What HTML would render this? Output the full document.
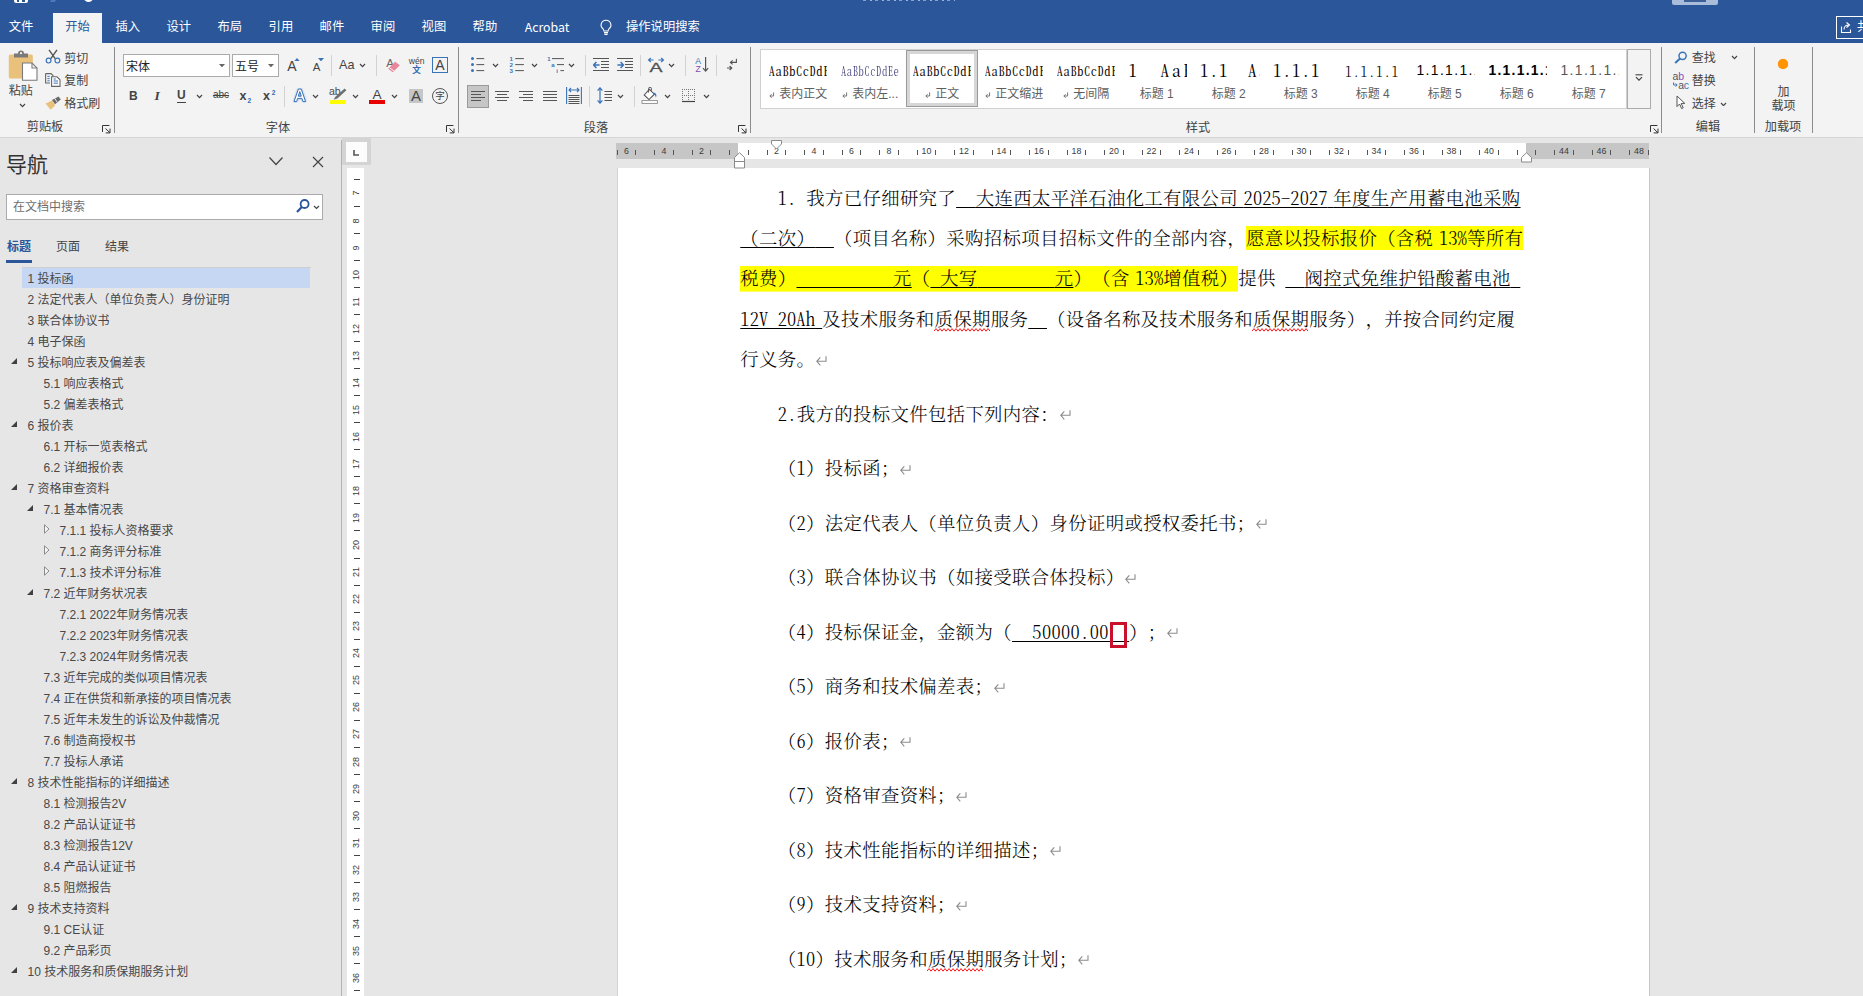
<!DOCTYPE html>
<html lang="zh-CN"><head><meta charset="utf-8"><title>Word</title>
<style>
html,body{margin:0;padding:0;}
body{width:1863px;height:996px;overflow:hidden;position:relative;background:#e6e6e6;font-family:'Liberation Sans','Noto Sans CJK SC',sans-serif;}
div,svg{box-sizing:content-box;}

.dl{position:absolute;height:28px;line-height:28px;font-family:'Noto Serif CJK SC','Liberation Serif',serif;font-size:18.4px;letter-spacing:0.34px;color:#000;font-weight:300;white-space:pre;text-spacing-trim:space-all;font-kerning:none;}
.dl .l{font-feature-settings:'hwid';letter-spacing:0.15px;}
.li .l{letter-spacing:0.36px;}
.dl .a{font-style:normal;font-feature-settings:'hwid';word-spacing:-4.0px;}
.dl u{text-decoration:underline;text-decoration-thickness:1.2px;text-underline-offset:1.7px;text-decoration-skip-ink:none;}
.dl .hl{background-image:linear-gradient(#ffff00,#ffff00);background-repeat:no-repeat;padding-bottom:1.5px;}
.dl .wv{position:relative;}
.dl .wz{position:absolute;left:-1px;top:23.2px;}
.dl .ret{display:inline-block;vertical-align:baseline;margin-left:0.5px;position:relative;top:-0.5px;}
.dl .rb{outline:3px solid #c8102e;outline-offset:-0.5px;}

</style></head><body>
<!-- document area -->
<div style="position:absolute;left:617px;top:168px;width:1032px;height:830px;background:#fff;border-left:1px solid #d4d4d4;box-sizing:border-box"></div>
<div style="position:absolute;left:1649px;top:168px;width:1px;height:830px;background:#c8c8c8"></div>
<div class="dl" style="left:777.7px;top:182.90px;word-spacing:0.5px;"><span class="l">1. </span>我方已仔细研究了<u><span class="l">  </span>大连西太平洋石油化工有限公司<i class="a"> </i><span class="l">2025-2027</span><i class="a"> </i>年度生产用蓄电池采购</u></div>
<div class="dl" style="left:740.3px;top:223.10px;"><u>（二次）<span class="l">  </span></u>（项目名称）采购招标项目招标文件的全部内容，<span class="hl" style="background-position:0 2.2px;background-size:100% 24px">愿意以投标报价（含税<i class="a"> </i><span class="l">13%</span>等所有</span></div>
<div class="dl" style="left:740.3px;top:263.40px;word-spacing:0.3px;"><span class="hl" style="background-position:0 1.5px;background-size:100% 25.6px">税费）<u><span class="l">          </span>元</u>（<u><span class="l"> </span>大写<span class="l">        </span>元</u>）（含<i class="a"> </i><span class="l">13%</span>增值税）</span>提供<span class="l"> </span><u><span class="l">  </span>阀控式免维护铅酸蓄电池<span class="l"> </span></u></div>
<div class="dl" style="left:740.3px;top:303.80px;"><u><span class="l">12V 20Ah</span><i class="a" style="word-spacing:-2.4px"> </i></u>及技术服务和<span class="wv">质保期<svg class="wz" width="56" height="4" viewBox="0 0 56 4"><path d="M0,3.2 L2,0.6 L4,3.2 L6,0.6 L8,3.2 L10,0.6 L12,3.2 L14,0.6 L16,3.2 L18,0.6 L20,3.2 L22,0.6 L24,3.2 L26,0.6 L28,3.2 L30,0.6 L32,3.2 L34,0.6 L36,3.2 L38,0.6 L40,3.2 L42,0.6 L44,3.2 L46,0.6 L48,3.2 L50,0.6 L52,3.2 L54,0.6 L56,3.2" fill="none" stroke="#ff1a1a" stroke-width="1"/></svg></span>服务<u><span class="l">  </span></u>（设备名称及技术服务和<span class="wv">质保期<svg class="wz" width="56" height="4" viewBox="0 0 56 4"><path d="M0,3.2 L2,0.6 L4,3.2 L6,0.6 L8,3.2 L10,0.6 L12,3.2 L14,0.6 L16,3.2 L18,0.6 L20,3.2 L22,0.6 L24,3.2 L26,0.6 L28,3.2 L30,0.6 L32,3.2 L34,0.6 L36,3.2 L38,0.6 L40,3.2 L42,0.6 L44,3.2 L46,0.6 L48,3.2 L50,0.6 L52,3.2 L54,0.6 L56,3.2" fill="none" stroke="#ff1a1a" stroke-width="1"/></svg></span>服务），并按合同约定履</div>
<div class="dl" style="left:740.3px;top:344.20px;">行义务。<svg class="ret" width="11" height="10" viewBox="0 0 11 10"><path d="M10,0.3 V5.3 H1 M4.3,1.3 L0.8,5.3 L4.3,9.3" fill="none" stroke="#8c8c8c" stroke-width="1.1"/></svg></div>
<div class="dl li" style="left:777.7px;top:398.90px;"><span class="l">2.</span>我方的投标文件包括下列内容：<svg class="ret" width="11" height="10" viewBox="0 0 11 10"><path d="M10,0.3 V5.3 H1 M4.3,1.3 L0.8,5.3 L4.3,9.3" fill="none" stroke="#8c8c8c" stroke-width="1.1"/></svg></div>
<div class="dl li" style="left:777.7px;top:453.40px;">（<span class="l">1</span>）投标函；<svg class="ret" width="11" height="10" viewBox="0 0 11 10"><path d="M10,0.3 V5.3 H1 M4.3,1.3 L0.8,5.3 L4.3,9.3" fill="none" stroke="#8c8c8c" stroke-width="1.1"/></svg></div>
<div class="dl li" style="left:777.7px;top:507.90px;">（<span class="l">2</span>）法定代表人（单位负责人）身份证明或授权委托书；<svg class="ret" width="11" height="10" viewBox="0 0 11 10"><path d="M10,0.3 V5.3 H1 M4.3,1.3 L0.8,5.3 L4.3,9.3" fill="none" stroke="#8c8c8c" stroke-width="1.1"/></svg></div>
<div class="dl li" style="left:777.7px;top:562.40px;">（<span class="l">3</span>）联合体协议书（如接受联合体投标）<svg class="ret" width="11" height="10" viewBox="0 0 11 10"><path d="M10,0.3 V5.3 H1 M4.3,1.3 L0.8,5.3 L4.3,9.3" fill="none" stroke="#8c8c8c" stroke-width="1.1"/></svg></div>
<div class="dl li" style="left:777.7px;top:616.90px;">（<span class="l">4</span>）投标保证金，金额为（<u><span class="l"><span style="word-spacing:0.6px">  50000.00  </span></span></u>）；<svg class="ret" width="11" height="10" viewBox="0 0 11 10"><path d="M10,0.3 V5.3 H1 M4.3,1.3 L0.8,5.3 L4.3,9.3" fill="none" stroke="#8c8c8c" stroke-width="1.1"/></svg></div>
<div class="dl li" style="left:777.7px;top:671.40px;">（<span class="l">5</span>）商务和技术偏差表；<svg class="ret" width="11" height="10" viewBox="0 0 11 10"><path d="M10,0.3 V5.3 H1 M4.3,1.3 L0.8,5.3 L4.3,9.3" fill="none" stroke="#8c8c8c" stroke-width="1.1"/></svg></div>
<div class="dl li" style="left:777.7px;top:725.90px;">（<span class="l">6</span>）报价表；<svg class="ret" width="11" height="10" viewBox="0 0 11 10"><path d="M10,0.3 V5.3 H1 M4.3,1.3 L0.8,5.3 L4.3,9.3" fill="none" stroke="#8c8c8c" stroke-width="1.1"/></svg></div>
<div class="dl li" style="left:777.7px;top:780.40px;">（<span class="l">7</span>）资格审查资料；<svg class="ret" width="11" height="10" viewBox="0 0 11 10"><path d="M10,0.3 V5.3 H1 M4.3,1.3 L0.8,5.3 L4.3,9.3" fill="none" stroke="#8c8c8c" stroke-width="1.1"/></svg></div>
<div class="dl li" style="left:777.7px;top:834.90px;">（<span class="l">8</span>）技术性能指标的详细描述；<svg class="ret" width="11" height="10" viewBox="0 0 11 10"><path d="M10,0.3 V5.3 H1 M4.3,1.3 L0.8,5.3 L4.3,9.3" fill="none" stroke="#8c8c8c" stroke-width="1.1"/></svg></div>
<div class="dl li" style="left:777.7px;top:889.40px;">（<span class="l">9</span>）技术支持资料；<svg class="ret" width="11" height="10" viewBox="0 0 11 10"><path d="M10,0.3 V5.3 H1 M4.3,1.3 L0.8,5.3 L4.3,9.3" fill="none" stroke="#8c8c8c" stroke-width="1.1"/></svg></div>
<div class="dl li" style="left:777.7px;top:943.90px;">（<span class="l">10</span>）技术服务和<span class="wv">质保期<svg class="wz" width="56" height="4" viewBox="0 0 56 4"><path d="M0,3.2 L2,0.6 L4,3.2 L6,0.6 L8,3.2 L10,0.6 L12,3.2 L14,0.6 L16,3.2 L18,0.6 L20,3.2 L22,0.6 L24,3.2 L26,0.6 L28,3.2 L30,0.6 L32,3.2 L34,0.6 L36,3.2 L38,0.6 L40,3.2 L42,0.6 L44,3.2 L46,0.6 L48,3.2 L50,0.6 L52,3.2 L54,0.6 L56,3.2" fill="none" stroke="#ff1a1a" stroke-width="1"/></svg></span>服务计划；<svg class="ret" width="11" height="10" viewBox="0 0 11 10"><path d="M10,0.3 V5.3 H1 M4.3,1.3 L0.8,5.3 L4.3,9.3" fill="none" stroke="#8c8c8c" stroke-width="1.1"/></svg></div>
<div style="position:absolute;left:1110.1px;top:622px;width:16.9px;height:25.8px;border:3px solid #c9112b;box-sizing:border-box"></div>
<!-- rulers -->
<div style="position:absolute;left:342px;top:138px;width:29px;height:27px;background:#d4d4d4"></div>
<div style="position:absolute;left:346px;top:142px;width:20.5px;height:19.5px;background:#fcfcfc"></div>
<svg style="position:absolute;left:352px;top:149px;" width="8" height="8" viewBox="0 0 8 8"><path d="M2,1 V6 H7" fill="none" stroke="#555" stroke-width="1.6"/></svg>
<div style="position:absolute;left:347px;top:168px;width:17px;height:828px;background:#fff"></div>
<div style="position:absolute;left:354px;top:179px;width:6px;height:1px;background:#444"></div>
<div style="position:absolute;left:354px;top:206px;width:6px;height:1px;background:#444"></div>
<div style="position:absolute;left:346.2px;top:187.4px;width:20px;height:12px;line-height:12px;text-align:center;font-size:9px;color:#3a3a3a;transform:rotate(-90deg);">7</div>
<div style="position:absolute;left:354px;top:233px;width:6px;height:1px;background:#444"></div>
<div style="position:absolute;left:346.2px;top:214.5px;width:20px;height:12px;line-height:12px;text-align:center;font-size:9px;color:#3a3a3a;transform:rotate(-90deg);">8</div>
<div style="position:absolute;left:354px;top:260px;width:6px;height:1px;background:#444"></div>
<div style="position:absolute;left:346.2px;top:241.5px;width:20px;height:12px;line-height:12px;text-align:center;font-size:9px;color:#3a3a3a;transform:rotate(-90deg);">9</div>
<div style="position:absolute;left:354px;top:287px;width:6px;height:1px;background:#444"></div>
<div style="position:absolute;left:346.2px;top:268.6px;width:20px;height:12px;line-height:12px;text-align:center;font-size:9px;color:#3a3a3a;transform:rotate(-90deg);">10</div>
<div style="position:absolute;left:354px;top:314px;width:6px;height:1px;background:#444"></div>
<div style="position:absolute;left:346.2px;top:295.6px;width:20px;height:12px;line-height:12px;text-align:center;font-size:9px;color:#3a3a3a;transform:rotate(-90deg);">11</div>
<div style="position:absolute;left:354px;top:341px;width:6px;height:1px;background:#444"></div>
<div style="position:absolute;left:346.2px;top:322.6px;width:20px;height:12px;line-height:12px;text-align:center;font-size:9px;color:#3a3a3a;transform:rotate(-90deg);">12</div>
<div style="position:absolute;left:354px;top:368px;width:6px;height:1px;background:#444"></div>
<div style="position:absolute;left:346.2px;top:349.7px;width:20px;height:12px;line-height:12px;text-align:center;font-size:9px;color:#3a3a3a;transform:rotate(-90deg);">13</div>
<div style="position:absolute;left:354px;top:395px;width:6px;height:1px;background:#444"></div>
<div style="position:absolute;left:346.2px;top:376.8px;width:20px;height:12px;line-height:12px;text-align:center;font-size:9px;color:#3a3a3a;transform:rotate(-90deg);">14</div>
<div style="position:absolute;left:354px;top:422px;width:6px;height:1px;background:#444"></div>
<div style="position:absolute;left:346.2px;top:403.8px;width:20px;height:12px;line-height:12px;text-align:center;font-size:9px;color:#3a3a3a;transform:rotate(-90deg);">15</div>
<div style="position:absolute;left:354px;top:449px;width:6px;height:1px;background:#444"></div>
<div style="position:absolute;left:346.2px;top:430.9px;width:20px;height:12px;line-height:12px;text-align:center;font-size:9px;color:#3a3a3a;transform:rotate(-90deg);">16</div>
<div style="position:absolute;left:354px;top:476px;width:6px;height:1px;background:#444"></div>
<div style="position:absolute;left:346.2px;top:457.9px;width:20px;height:12px;line-height:12px;text-align:center;font-size:9px;color:#3a3a3a;transform:rotate(-90deg);">17</div>
<div style="position:absolute;left:354px;top:503px;width:6px;height:1px;background:#444"></div>
<div style="position:absolute;left:346.2px;top:485.0px;width:20px;height:12px;line-height:12px;text-align:center;font-size:9px;color:#3a3a3a;transform:rotate(-90deg);">18</div>
<div style="position:absolute;left:354px;top:530px;width:6px;height:1px;background:#444"></div>
<div style="position:absolute;left:346.2px;top:512.0px;width:20px;height:12px;line-height:12px;text-align:center;font-size:9px;color:#3a3a3a;transform:rotate(-90deg);">19</div>
<div style="position:absolute;left:354px;top:558px;width:6px;height:1px;background:#444"></div>
<div style="position:absolute;left:346.2px;top:539.1px;width:20px;height:12px;line-height:12px;text-align:center;font-size:9px;color:#3a3a3a;transform:rotate(-90deg);">20</div>
<div style="position:absolute;left:354px;top:585px;width:6px;height:1px;background:#444"></div>
<div style="position:absolute;left:346.2px;top:566.1px;width:20px;height:12px;line-height:12px;text-align:center;font-size:9px;color:#3a3a3a;transform:rotate(-90deg);">21</div>
<div style="position:absolute;left:354px;top:612px;width:6px;height:1px;background:#444"></div>
<div style="position:absolute;left:346.2px;top:593.1px;width:20px;height:12px;line-height:12px;text-align:center;font-size:9px;color:#3a3a3a;transform:rotate(-90deg);">22</div>
<div style="position:absolute;left:354px;top:639px;width:6px;height:1px;background:#444"></div>
<div style="position:absolute;left:346.2px;top:620.2px;width:20px;height:12px;line-height:12px;text-align:center;font-size:9px;color:#3a3a3a;transform:rotate(-90deg);">23</div>
<div style="position:absolute;left:354px;top:666px;width:6px;height:1px;background:#444"></div>
<div style="position:absolute;left:346.2px;top:647.2px;width:20px;height:12px;line-height:12px;text-align:center;font-size:9px;color:#3a3a3a;transform:rotate(-90deg);">24</div>
<div style="position:absolute;left:354px;top:693px;width:6px;height:1px;background:#444"></div>
<div style="position:absolute;left:346.2px;top:674.3px;width:20px;height:12px;line-height:12px;text-align:center;font-size:9px;color:#3a3a3a;transform:rotate(-90deg);">25</div>
<div style="position:absolute;left:354px;top:720px;width:6px;height:1px;background:#444"></div>
<div style="position:absolute;left:346.2px;top:701.4px;width:20px;height:12px;line-height:12px;text-align:center;font-size:9px;color:#3a3a3a;transform:rotate(-90deg);">26</div>
<div style="position:absolute;left:354px;top:747px;width:6px;height:1px;background:#444"></div>
<div style="position:absolute;left:346.2px;top:728.4px;width:20px;height:12px;line-height:12px;text-align:center;font-size:9px;color:#3a3a3a;transform:rotate(-90deg);">27</div>
<div style="position:absolute;left:354px;top:774px;width:6px;height:1px;background:#444"></div>
<div style="position:absolute;left:346.2px;top:755.5px;width:20px;height:12px;line-height:12px;text-align:center;font-size:9px;color:#3a3a3a;transform:rotate(-90deg);">28</div>
<div style="position:absolute;left:354px;top:801px;width:6px;height:1px;background:#444"></div>
<div style="position:absolute;left:346.2px;top:782.5px;width:20px;height:12px;line-height:12px;text-align:center;font-size:9px;color:#3a3a3a;transform:rotate(-90deg);">29</div>
<div style="position:absolute;left:354px;top:828px;width:6px;height:1px;background:#444"></div>
<div style="position:absolute;left:346.2px;top:809.5px;width:20px;height:12px;line-height:12px;text-align:center;font-size:9px;color:#3a3a3a;transform:rotate(-90deg);">30</div>
<div style="position:absolute;left:354px;top:855px;width:6px;height:1px;background:#444"></div>
<div style="position:absolute;left:346.2px;top:836.6px;width:20px;height:12px;line-height:12px;text-align:center;font-size:9px;color:#3a3a3a;transform:rotate(-90deg);">31</div>
<div style="position:absolute;left:354px;top:882px;width:6px;height:1px;background:#444"></div>
<div style="position:absolute;left:346.2px;top:863.6px;width:20px;height:12px;line-height:12px;text-align:center;font-size:9px;color:#3a3a3a;transform:rotate(-90deg);">32</div>
<div style="position:absolute;left:354px;top:909px;width:6px;height:1px;background:#444"></div>
<div style="position:absolute;left:346.2px;top:890.7px;width:20px;height:12px;line-height:12px;text-align:center;font-size:9px;color:#3a3a3a;transform:rotate(-90deg);">33</div>
<div style="position:absolute;left:354px;top:936px;width:6px;height:1px;background:#444"></div>
<div style="position:absolute;left:346.2px;top:917.8px;width:20px;height:12px;line-height:12px;text-align:center;font-size:9px;color:#3a3a3a;transform:rotate(-90deg);">34</div>
<div style="position:absolute;left:354px;top:963px;width:6px;height:1px;background:#444"></div>
<div style="position:absolute;left:346.2px;top:944.8px;width:20px;height:12px;line-height:12px;text-align:center;font-size:9px;color:#3a3a3a;transform:rotate(-90deg);">35</div>
<div style="position:absolute;left:354px;top:990px;width:6px;height:1px;background:#444"></div>
<div style="position:absolute;left:346.2px;top:971.9px;width:20px;height:12px;line-height:12px;text-align:center;font-size:9px;color:#3a3a3a;transform:rotate(-90deg);">36</div>
<div style="position:absolute;left:616px;top:143px;width:1033px;height:16px;background:#fff"></div>
<div style="position:absolute;left:616px;top:143px;width:122px;height:16px;background:#c6c6c6"></div>
<div style="position:absolute;left:1526px;top:143px;width:123px;height:16px;background:#c6c6c6"></div>
<div style="position:absolute;left:617px;top:150px;width:1px;height:5px;background:#555"></div>
<div style="position:absolute;left:635px;top:150px;width:1px;height:5px;background:#555"></div>
<div style="position:absolute;left:654px;top:150px;width:1px;height:5px;background:#555"></div>
<div style="position:absolute;left:673px;top:150px;width:1px;height:5px;background:#555"></div>
<div style="position:absolute;left:692px;top:150px;width:1px;height:5px;background:#555"></div>
<div style="position:absolute;left:710px;top:150px;width:1px;height:5px;background:#555"></div>
<div style="position:absolute;left:729px;top:150px;width:1px;height:5px;background:#555"></div>
<div style="position:absolute;left:748px;top:150px;width:1px;height:5px;background:#555"></div>
<div style="position:absolute;left:767px;top:150px;width:1px;height:5px;background:#555"></div>
<div style="position:absolute;left:785px;top:150px;width:1px;height:5px;background:#555"></div>
<div style="position:absolute;left:804px;top:150px;width:1px;height:5px;background:#555"></div>
<div style="position:absolute;left:823px;top:150px;width:1px;height:5px;background:#555"></div>
<div style="position:absolute;left:842px;top:150px;width:1px;height:5px;background:#555"></div>
<div style="position:absolute;left:860px;top:150px;width:1px;height:5px;background:#555"></div>
<div style="position:absolute;left:879px;top:150px;width:1px;height:5px;background:#555"></div>
<div style="position:absolute;left:898px;top:150px;width:1px;height:5px;background:#555"></div>
<div style="position:absolute;left:917px;top:150px;width:1px;height:5px;background:#555"></div>
<div style="position:absolute;left:935px;top:150px;width:1px;height:5px;background:#555"></div>
<div style="position:absolute;left:954px;top:150px;width:1px;height:5px;background:#555"></div>
<div style="position:absolute;left:973px;top:150px;width:1px;height:5px;background:#555"></div>
<div style="position:absolute;left:992px;top:150px;width:1px;height:5px;background:#555"></div>
<div style="position:absolute;left:1010px;top:150px;width:1px;height:5px;background:#555"></div>
<div style="position:absolute;left:1029px;top:150px;width:1px;height:5px;background:#555"></div>
<div style="position:absolute;left:1048px;top:150px;width:1px;height:5px;background:#555"></div>
<div style="position:absolute;left:1067px;top:150px;width:1px;height:5px;background:#555"></div>
<div style="position:absolute;left:1085px;top:150px;width:1px;height:5px;background:#555"></div>
<div style="position:absolute;left:1104px;top:150px;width:1px;height:5px;background:#555"></div>
<div style="position:absolute;left:1123px;top:150px;width:1px;height:5px;background:#555"></div>
<div style="position:absolute;left:1142px;top:150px;width:1px;height:5px;background:#555"></div>
<div style="position:absolute;left:1160px;top:150px;width:1px;height:5px;background:#555"></div>
<div style="position:absolute;left:1179px;top:150px;width:1px;height:5px;background:#555"></div>
<div style="position:absolute;left:1198px;top:150px;width:1px;height:5px;background:#555"></div>
<div style="position:absolute;left:1217px;top:150px;width:1px;height:5px;background:#555"></div>
<div style="position:absolute;left:1235px;top:150px;width:1px;height:5px;background:#555"></div>
<div style="position:absolute;left:1254px;top:150px;width:1px;height:5px;background:#555"></div>
<div style="position:absolute;left:1273px;top:150px;width:1px;height:5px;background:#555"></div>
<div style="position:absolute;left:1292px;top:150px;width:1px;height:5px;background:#555"></div>
<div style="position:absolute;left:1310px;top:150px;width:1px;height:5px;background:#555"></div>
<div style="position:absolute;left:1329px;top:150px;width:1px;height:5px;background:#555"></div>
<div style="position:absolute;left:1348px;top:150px;width:1px;height:5px;background:#555"></div>
<div style="position:absolute;left:1367px;top:150px;width:1px;height:5px;background:#555"></div>
<div style="position:absolute;left:1385px;top:150px;width:1px;height:5px;background:#555"></div>
<div style="position:absolute;left:1404px;top:150px;width:1px;height:5px;background:#555"></div>
<div style="position:absolute;left:1423px;top:150px;width:1px;height:5px;background:#555"></div>
<div style="position:absolute;left:1442px;top:150px;width:1px;height:5px;background:#555"></div>
<div style="position:absolute;left:1460px;top:150px;width:1px;height:5px;background:#555"></div>
<div style="position:absolute;left:1479px;top:150px;width:1px;height:5px;background:#555"></div>
<div style="position:absolute;left:1498px;top:150px;width:1px;height:5px;background:#555"></div>
<div style="position:absolute;left:1517px;top:150px;width:1px;height:5px;background:#555"></div>
<div style="position:absolute;left:1535px;top:150px;width:1px;height:5px;background:#555"></div>
<div style="position:absolute;left:1554px;top:150px;width:1px;height:5px;background:#555"></div>
<div style="position:absolute;left:1573px;top:150px;width:1px;height:5px;background:#555"></div>
<div style="position:absolute;left:1592px;top:150px;width:1px;height:5px;background:#555"></div>
<div style="position:absolute;left:1610px;top:150px;width:1px;height:5px;background:#555"></div>
<div style="position:absolute;left:1629px;top:150px;width:1px;height:5px;background:#555"></div>
<div style="position:absolute;left:1648px;top:150px;width:1px;height:5px;background:#555"></div>
<div style="position:absolute;left:616.5px;top:146px;width:20px;height:11px;line-height:11px;text-align:center;font-size:8.8px;color:#3a3a3a;">6</div>
<div style="position:absolute;left:654.0px;top:146px;width:20px;height:11px;line-height:11px;text-align:center;font-size:8.8px;color:#3a3a3a;">4</div>
<div style="position:absolute;left:691.5px;top:146px;width:20px;height:11px;line-height:11px;text-align:center;font-size:8.8px;color:#3a3a3a;">2</div>
<div style="position:absolute;left:766.5px;top:146px;width:20px;height:11px;line-height:11px;text-align:center;font-size:8.8px;color:#3a3a3a;">2</div>
<div style="position:absolute;left:804.0px;top:146px;width:20px;height:11px;line-height:11px;text-align:center;font-size:8.8px;color:#3a3a3a;">4</div>
<div style="position:absolute;left:841.5px;top:146px;width:20px;height:11px;line-height:11px;text-align:center;font-size:8.8px;color:#3a3a3a;">6</div>
<div style="position:absolute;left:879.0px;top:146px;width:20px;height:11px;line-height:11px;text-align:center;font-size:8.8px;color:#3a3a3a;">8</div>
<div style="position:absolute;left:916.5px;top:146px;width:20px;height:11px;line-height:11px;text-align:center;font-size:8.8px;color:#3a3a3a;">10</div>
<div style="position:absolute;left:954.0px;top:146px;width:20px;height:11px;line-height:11px;text-align:center;font-size:8.8px;color:#3a3a3a;">12</div>
<div style="position:absolute;left:991.5px;top:146px;width:20px;height:11px;line-height:11px;text-align:center;font-size:8.8px;color:#3a3a3a;">14</div>
<div style="position:absolute;left:1029.0px;top:146px;width:20px;height:11px;line-height:11px;text-align:center;font-size:8.8px;color:#3a3a3a;">16</div>
<div style="position:absolute;left:1066.5px;top:146px;width:20px;height:11px;line-height:11px;text-align:center;font-size:8.8px;color:#3a3a3a;">18</div>
<div style="position:absolute;left:1104.0px;top:146px;width:20px;height:11px;line-height:11px;text-align:center;font-size:8.8px;color:#3a3a3a;">20</div>
<div style="position:absolute;left:1141.5px;top:146px;width:20px;height:11px;line-height:11px;text-align:center;font-size:8.8px;color:#3a3a3a;">22</div>
<div style="position:absolute;left:1179.0px;top:146px;width:20px;height:11px;line-height:11px;text-align:center;font-size:8.8px;color:#3a3a3a;">24</div>
<div style="position:absolute;left:1216.5px;top:146px;width:20px;height:11px;line-height:11px;text-align:center;font-size:8.8px;color:#3a3a3a;">26</div>
<div style="position:absolute;left:1254.0px;top:146px;width:20px;height:11px;line-height:11px;text-align:center;font-size:8.8px;color:#3a3a3a;">28</div>
<div style="position:absolute;left:1291.5px;top:146px;width:20px;height:11px;line-height:11px;text-align:center;font-size:8.8px;color:#3a3a3a;">30</div>
<div style="position:absolute;left:1329.0px;top:146px;width:20px;height:11px;line-height:11px;text-align:center;font-size:8.8px;color:#3a3a3a;">32</div>
<div style="position:absolute;left:1366.5px;top:146px;width:20px;height:11px;line-height:11px;text-align:center;font-size:8.8px;color:#3a3a3a;">34</div>
<div style="position:absolute;left:1404.0px;top:146px;width:20px;height:11px;line-height:11px;text-align:center;font-size:8.8px;color:#3a3a3a;">36</div>
<div style="position:absolute;left:1441.5px;top:146px;width:20px;height:11px;line-height:11px;text-align:center;font-size:8.8px;color:#3a3a3a;">38</div>
<div style="position:absolute;left:1479.0px;top:146px;width:20px;height:11px;line-height:11px;text-align:center;font-size:8.8px;color:#3a3a3a;">40</div>
<div style="position:absolute;left:1554.0px;top:146px;width:20px;height:11px;line-height:11px;text-align:center;font-size:8.8px;color:#3a3a3a;">44</div>
<div style="position:absolute;left:1591.5px;top:146px;width:20px;height:11px;line-height:11px;text-align:center;font-size:8.8px;color:#3a3a3a;">46</div>
<div style="position:absolute;left:1629.0px;top:146px;width:20px;height:11px;line-height:11px;text-align:center;font-size:8.8px;color:#3a3a3a;">48</div>
<svg style="position:absolute;left:771px;top:140.4px;" width="12" height="10" viewBox="0 0 12 10"><path d="M0.5,0.5 H10.5 V4 L5.5,9 L0.5,4 Z" fill="#fff" stroke="#8a8a8a" stroke-width="1"/></svg>
<svg style="position:absolute;left:734px;top:151.6px;" width="12" height="17" viewBox="0 0 12 17"><path d="M0.5,5.5 L5.5,0.7 L10.5,5.5 V16 H0.5 Z M0.5,9.5 H10.5" fill="#fff" stroke="#8a8a8a" stroke-width="1"/></svg>
<svg style="position:absolute;left:1520.6px;top:151.6px;" width="12" height="11" viewBox="0 0 12 11"><path d="M0.5,5.5 L5.5,0.7 L10.5,5.5 V10 H0.5 Z" fill="#fff" stroke="#8a8a8a" stroke-width="1"/></svg>
<!-- navigation pane -->
<div style="position:absolute;left:0px;top:138px;width:341px;height:858px;background:#e6e6e6"></div>
<div style="position:absolute;left:341px;top:140px;width:1px;height:856px;background:#b2b2b2"></div>
<div style="position:absolute;left:6.0px;top:151.00px;height:28px;line-height:28px;font-size:21px;color:#333;white-space:pre;">导航</div>
<svg style="position:absolute;left:268px;top:156px;" width="16" height="10" viewBox="0 0 16 10"><path d="M1.5,1.5 L8,8.5 L14.5,1.5" fill="none" stroke="#444" stroke-width="1.2"/></svg>
<svg style="position:absolute;left:312px;top:155.5px;" width="12" height="12" viewBox="0 0 12 12"><path d="M1,1 L11,11 M11,1 L1,11" fill="none" stroke="#444" stroke-width="1.2"/></svg>
<div style="position:absolute;left:6px;top:194px;width:317px;height:25.5px;background:#fff;border:1px solid #ababab;box-sizing:border-box"></div>
<div style="position:absolute;left:13px;top:197.60px;height:18px;line-height:18px;font-size:12px;color:#6e6e6e;white-space:pre;">在文档中搜索</div>
<svg style="position:absolute;left:295px;top:198px;" width="16" height="16" viewBox="0 0 16 16"><circle cx="9.6" cy="6" r="4" fill="none" stroke="#2b579a" stroke-width="1.8"/><path d="M6.8,9 L2,14" stroke="#2b579a" stroke-width="2.2"/></svg>
<svg style="position:absolute;left:313.0px;top:205.25px;" width="7" height="4.5" viewBox="0 0 7 4.5"><path d="M1,1 L3.5,3.5 L6,1" fill="none" stroke="#444" stroke-width="1.2"/></svg>
<div style="position:absolute;left:7px;top:237.70px;height:18px;line-height:18px;font-size:12px;color:#2b579a;white-space:pre;font-weight:bold;">标题</div>
<div style="position:absolute;left:56px;top:237.70px;height:18px;line-height:18px;font-size:12px;color:#444;white-space:pre;">页面</div>
<div style="position:absolute;left:105px;top:237.70px;height:18px;line-height:18px;font-size:12px;color:#444;white-space:pre;">结果</div>
<div style="position:absolute;left:6px;top:259.5px;width:26px;height:3.5px;background:#2b579a"></div>
<div style="position:absolute;left:22px;top:267px;width:289px;height:1px;background:#cfcfcf"></div>
<div style="position:absolute;left:22px;top:268px;width:288px;height:19.6px;background:#c5d7f2"></div>
<div style="position:absolute;left:27.5px;top:269.80px;height:18px;line-height:18px;font-size:12px;color:#484848;white-space:pre;">1 投标函</div>
<div style="position:absolute;left:27.5px;top:290.80px;height:18px;line-height:18px;font-size:12px;color:#484848;white-space:pre;">2 法定代表人（单位负责人）身份证明</div>
<div style="position:absolute;left:27.5px;top:311.80px;height:18px;line-height:18px;font-size:12px;color:#484848;white-space:pre;">3 联合体协议书</div>
<div style="position:absolute;left:27.5px;top:332.80px;height:18px;line-height:18px;font-size:12px;color:#484848;white-space:pre;">4 电子保函</div>
<div style="position:absolute;left:27.5px;top:353.80px;height:18px;line-height:18px;font-size:12px;color:#484848;white-space:pre;">5 投标响应表及偏差表</div>
<svg style="position:absolute;left:11px;top:358.3px;" width="6" height="6" viewBox="0 0 6 6"><path d="M6,0 V6 H0 Z" fill="#404040"/></svg>
<div style="position:absolute;left:43.5px;top:374.80px;height:18px;line-height:18px;font-size:12px;color:#484848;white-space:pre;">5.1 响应表格式</div>
<div style="position:absolute;left:43.5px;top:395.80px;height:18px;line-height:18px;font-size:12px;color:#484848;white-space:pre;">5.2 偏差表格式</div>
<div style="position:absolute;left:27.5px;top:416.80px;height:18px;line-height:18px;font-size:12px;color:#484848;white-space:pre;">6 报价表</div>
<svg style="position:absolute;left:11px;top:421.3px;" width="6" height="6" viewBox="0 0 6 6"><path d="M6,0 V6 H0 Z" fill="#404040"/></svg>
<div style="position:absolute;left:43.5px;top:437.80px;height:18px;line-height:18px;font-size:12px;color:#484848;white-space:pre;">6.1 开标一览表格式</div>
<div style="position:absolute;left:43.5px;top:458.80px;height:18px;line-height:18px;font-size:12px;color:#484848;white-space:pre;">6.2 详细报价表</div>
<div style="position:absolute;left:27.5px;top:479.80px;height:18px;line-height:18px;font-size:12px;color:#484848;white-space:pre;">7 资格审查资料</div>
<svg style="position:absolute;left:11px;top:484.3px;" width="6" height="6" viewBox="0 0 6 6"><path d="M6,0 V6 H0 Z" fill="#404040"/></svg>
<div style="position:absolute;left:43.5px;top:500.80px;height:18px;line-height:18px;font-size:12px;color:#484848;white-space:pre;">7.1 基本情况表</div>
<svg style="position:absolute;left:27px;top:505.3px;" width="6" height="6" viewBox="0 0 6 6"><path d="M6,0 V6 H0 Z" fill="#404040"/></svg>
<div style="position:absolute;left:59.5px;top:521.80px;height:18px;line-height:18px;font-size:12px;color:#484848;white-space:pre;">7.1.1 投标人资格要求</div>
<svg style="position:absolute;left:44px;top:524.3px;" width="6" height="10" viewBox="0 0 6 10"><path d="M0.5,0.8 L5,5 L0.5,9.2 Z" fill="#f6f6f6" stroke="#8a8a8a" stroke-width="1"/></svg>
<div style="position:absolute;left:59.5px;top:542.80px;height:18px;line-height:18px;font-size:12px;color:#484848;white-space:pre;">7.1.2 商务评分标准</div>
<svg style="position:absolute;left:44px;top:545.3px;" width="6" height="10" viewBox="0 0 6 10"><path d="M0.5,0.8 L5,5 L0.5,9.2 Z" fill="#f6f6f6" stroke="#8a8a8a" stroke-width="1"/></svg>
<div style="position:absolute;left:59.5px;top:563.80px;height:18px;line-height:18px;font-size:12px;color:#484848;white-space:pre;">7.1.3 技术评分标准</div>
<svg style="position:absolute;left:44px;top:566.3px;" width="6" height="10" viewBox="0 0 6 10"><path d="M0.5,0.8 L5,5 L0.5,9.2 Z" fill="#f6f6f6" stroke="#8a8a8a" stroke-width="1"/></svg>
<div style="position:absolute;left:43.5px;top:584.80px;height:18px;line-height:18px;font-size:12px;color:#484848;white-space:pre;">7.2 近年财务状况表</div>
<svg style="position:absolute;left:27px;top:589.3px;" width="6" height="6" viewBox="0 0 6 6"><path d="M6,0 V6 H0 Z" fill="#404040"/></svg>
<div style="position:absolute;left:59.5px;top:605.80px;height:18px;line-height:18px;font-size:12px;color:#484848;white-space:pre;">7.2.1 2022年财务情况表</div>
<div style="position:absolute;left:59.5px;top:626.80px;height:18px;line-height:18px;font-size:12px;color:#484848;white-space:pre;">7.2.2 2023年财务情况表</div>
<div style="position:absolute;left:59.5px;top:647.80px;height:18px;line-height:18px;font-size:12px;color:#484848;white-space:pre;">7.2.3 2024年财务情况表</div>
<div style="position:absolute;left:43.5px;top:668.80px;height:18px;line-height:18px;font-size:12px;color:#484848;white-space:pre;">7.3 近年完成的类似项目情况表</div>
<div style="position:absolute;left:43.5px;top:689.80px;height:18px;line-height:18px;font-size:12px;color:#484848;white-space:pre;">7.4 正在供货和新承接的项目情况表</div>
<div style="position:absolute;left:43.5px;top:710.80px;height:18px;line-height:18px;font-size:12px;color:#484848;white-space:pre;">7.5 近年未发生的诉讼及仲裁情况</div>
<div style="position:absolute;left:43.5px;top:731.80px;height:18px;line-height:18px;font-size:12px;color:#484848;white-space:pre;">7.6 制造商授权书</div>
<div style="position:absolute;left:43.5px;top:752.80px;height:18px;line-height:18px;font-size:12px;color:#484848;white-space:pre;">7.7 投标人承诺</div>
<div style="position:absolute;left:27.5px;top:773.80px;height:18px;line-height:18px;font-size:12px;color:#484848;white-space:pre;">8 技术性能指标的详细描述</div>
<svg style="position:absolute;left:11px;top:778.3px;" width="6" height="6" viewBox="0 0 6 6"><path d="M6,0 V6 H0 Z" fill="#404040"/></svg>
<div style="position:absolute;left:43.5px;top:794.80px;height:18px;line-height:18px;font-size:12px;color:#484848;white-space:pre;">8.1 检测报告2V</div>
<div style="position:absolute;left:43.5px;top:815.80px;height:18px;line-height:18px;font-size:12px;color:#484848;white-space:pre;">8.2 产品认证证书</div>
<div style="position:absolute;left:43.5px;top:836.80px;height:18px;line-height:18px;font-size:12px;color:#484848;white-space:pre;">8.3 检测报告12V</div>
<div style="position:absolute;left:43.5px;top:857.80px;height:18px;line-height:18px;font-size:12px;color:#484848;white-space:pre;">8.4 产品认证证书</div>
<div style="position:absolute;left:43.5px;top:878.80px;height:18px;line-height:18px;font-size:12px;color:#484848;white-space:pre;">8.5 阻燃报告</div>
<div style="position:absolute;left:27.5px;top:899.80px;height:18px;line-height:18px;font-size:12px;color:#484848;white-space:pre;">9 技术支持资料</div>
<svg style="position:absolute;left:11px;top:904.3px;" width="6" height="6" viewBox="0 0 6 6"><path d="M6,0 V6 H0 Z" fill="#404040"/></svg>
<div style="position:absolute;left:43.5px;top:920.80px;height:18px;line-height:18px;font-size:12px;color:#484848;white-space:pre;">9.1 CE认证</div>
<div style="position:absolute;left:43.5px;top:941.80px;height:18px;line-height:18px;font-size:12px;color:#484848;white-space:pre;">9.2 产品彩页</div>
<div style="position:absolute;left:27.5px;top:962.80px;height:18px;line-height:18px;font-size:12px;color:#484848;white-space:pre;">10 技术服务和质保期服务计划</div>
<svg style="position:absolute;left:11px;top:967.3px;" width="6" height="6" viewBox="0 0 6 6"><path d="M6,0 V6 H0 Z" fill="#404040"/></svg>
<!-- title bar + tabs -->
<div style="position:absolute;left:0px;top:0px;width:1863px;height:43px;background:#2b579a"></div>
<div style="position:absolute;left:14px;top:0px;width:14px;height:3px;background:#fff;border-radius:0 0 2px 2px"></div>
<div style="position:absolute;left:17px;top:0px;width:2px;height:2px;background:#2b579a"></div>
<div style="position:absolute;left:22px;top:0px;width:3px;height:2px;background:#2b579a"></div>
<div style="position:absolute;left:84px;top:-6px;width:9px;height:8px;background:#fff;border-radius:50%"></div>
<div style="position:absolute;left:51px;top:-2px;width:5px;height:4px;background:#4a7ab8;transform:skewX(-30deg)"></div>
<div style="position:absolute;left:863px;top:0px;width:92px;height:1px;background:repeating-linear-gradient(90deg,#9db2d6 0 3px,#2b579a 3px 7px,#b9c8e2 7px 9px,#2b579a 9px 12px);opacity:.8"></div>
<div style="position:absolute;left:1672px;top:0px;width:46px;height:5px;background:#a9bcd9;border-radius:0 0 2px 2px"></div>
<div style="position:absolute;left:1684px;top:0px;width:22px;height:2px;background:#3d5f97"></div>
<div style="position:absolute;left:53px;top:13px;width:49px;height:30px;background:#f3f3f3"></div>
<div style="position:absolute;left:-9.0px;top:18.15px;height:18.3px;line-height:18.3px;font-size:12.3px;color:#fff;white-space:pre;width:60px;text-align:center;">文件</div>
<div style="position:absolute;left:47.5px;top:18.15px;height:18.3px;line-height:18.3px;font-size:12.3px;color:#2b579a;white-space:pre;width:60px;text-align:center;">开始</div>
<div style="position:absolute;left:97.8px;top:18.15px;height:18.3px;line-height:18.3px;font-size:12.3px;color:#fff;white-space:pre;width:60px;text-align:center;">插入</div>
<div style="position:absolute;left:148.8px;top:18.15px;height:18.3px;line-height:18.3px;font-size:12.3px;color:#fff;white-space:pre;width:60px;text-align:center;">设计</div>
<div style="position:absolute;left:199.8px;top:18.15px;height:18.3px;line-height:18.3px;font-size:12.3px;color:#fff;white-space:pre;width:60px;text-align:center;">布局</div>
<div style="position:absolute;left:250.89999999999998px;top:18.15px;height:18.3px;line-height:18.3px;font-size:12.3px;color:#fff;white-space:pre;width:60px;text-align:center;">引用</div>
<div style="position:absolute;left:301.9px;top:18.15px;height:18.3px;line-height:18.3px;font-size:12.3px;color:#fff;white-space:pre;width:60px;text-align:center;">邮件</div>
<div style="position:absolute;left:352.9px;top:18.15px;height:18.3px;line-height:18.3px;font-size:12.3px;color:#fff;white-space:pre;width:60px;text-align:center;">审阅</div>
<div style="position:absolute;left:403.9px;top:18.15px;height:18.3px;line-height:18.3px;font-size:12.3px;color:#fff;white-space:pre;width:60px;text-align:center;">视图</div>
<div style="position:absolute;left:454.9px;top:18.15px;height:18.3px;line-height:18.3px;font-size:12.3px;color:#fff;white-space:pre;width:60px;text-align:center;">帮助</div>
<div style="position:absolute;left:507.0px;top:17.65px;height:18.3px;line-height:18.3px;font-size:12.3px;color:#fff;white-space:pre;width:80px;text-align:center;font-family:'Noto Sans CJK SC','Liberation Sans',sans-serif;">Acrobat</div>
<svg style="position:absolute;left:599px;top:19px;" width="14" height="18" viewBox="0 0 14 18"><path d="M7,1.2 a4.8,4.8 0 0 1 3,8.6 c-0.6,0.6 -0.9,1.3 -0.9,2.2 h-4.2 c0,-0.9 -0.3,-1.6 -0.9,-2.2 a4.8,4.8 0 0 1 3,-8.6z M5,13.6h4 M5.4,15.4h3.2" fill="none" stroke="#fff" stroke-width="1.1"/></svg>
<div style="position:absolute;left:626px;top:17.65px;height:18.3px;line-height:18.3px;font-size:12.3px;color:#fff;white-space:pre;">操作说明搜索</div>
<div style="position:absolute;left:1836px;top:16px;width:40px;height:23px;border:1px solid #fff;box-sizing:border-box"></div>
<svg style="position:absolute;left:1840px;top:21px;" width="13" height="13" viewBox="0 0 13 13"><path d="M1.5,5.5 V11.5 H10.5 V8.5 M4,8.5 C4,5.5 6,4 8.5,4 M6.5,1.5 L9.5,4 L6.5,6.5" fill="none" stroke="#fff" stroke-width="1.1"/></svg>
<div style="position:absolute;left:1857px;top:18.35px;height:18.3px;line-height:18.3px;font-size:12.3px;color:#fff;white-space:pre;">共享</div>
<!-- ribbon -->
<div style="position:absolute;left:0px;top:43px;width:1863px;height:94px;background:#f3f3f3"></div>
<div style="position:absolute;left:0px;top:136.6px;width:1863px;height:1.6px;background:linear-gradient(#dcdcdc,#cfcfcf)"></div>
<svg style="position:absolute;left:8px;top:50px;" width="30" height="31" viewBox="0 0 30 31">
<rect x="0.8" y="4.5" width="24" height="24" rx="1.5" fill="#eac17a"/>
<path d="M6,7.5 V3.5 H10 a3,3 0 0 1 6,0 H20 V7.5 Z" fill="#7a7a7a"/>
<circle cx="13" cy="3.2" r="1.1" fill="#f3f3f3"/>
<path d="M14.5,13 H24 L29,18 V30.3 H14.5 Z" fill="#fff" stroke="#7a7a7a" stroke-width="1.1"/>
<path d="M24,13 V18 H29" fill="none" stroke="#7a7a7a" stroke-width="1.1"/></svg>
<div style="position:absolute;left:0.8000000000000007px;top:82.30px;height:18px;line-height:18px;font-size:12px;color:#444;white-space:pre;width:40px;text-align:center;">粘贴</div>
<svg style="position:absolute;left:19.1px;top:103.0px;" width="7" height="4.6" viewBox="0 0 7 4.6"><path d="M1,1 L3.5,3.6 L6,1" fill="none" stroke="#444" stroke-width="1.2"/></svg>
<svg style="position:absolute;left:45px;top:49px;" width="16" height="15" viewBox="0 0 16 15">
<path d="M4,0.8 L10.2,9.6 M12,0.8 L5.8,9.6" stroke="#555" stroke-width="1.4" fill="none"/>
<circle cx="3.6" cy="11.6" r="2.4" fill="none" stroke="#3a74b8" stroke-width="1.2"/>
<circle cx="12.4" cy="11.6" r="2.4" fill="none" stroke="#3a74b8" stroke-width="1.2"/></svg>
<div style="position:absolute;left:64.3px;top:49.50px;height:18px;line-height:18px;font-size:12px;color:#444;white-space:pre;">剪切</div>
<svg style="position:absolute;left:44.5px;top:73px;" width="16" height="14" viewBox="0 0 16 14">
<path d="M0.6,0.6 H6 L8,2.6 V3.6 M0.6,0.6 V10 H5" fill="none" stroke="#666" stroke-width="1.1"/>
<path d="M6.6,3.8 H12 L15,6.8 V13.4 H6.6 Z" fill="#fff" stroke="#666" stroke-width="1.1"/>
<path d="M2.4,3.4 H4.6 M2.4,5.6 H4.6 M2.4,7.8 H4.6 M8.6,8 H13 M8.6,10.2 H13 M8.6,6 H10.8" stroke="#3a74b8" stroke-width="1"/></svg>
<div style="position:absolute;left:64.3px;top:72.30px;height:18px;line-height:18px;font-size:12px;color:#444;white-space:pre;">复制</div>
<svg style="position:absolute;left:45px;top:96px;" width="17" height="15" viewBox="0 0 17 15">
<path d="M0.5,7.5 L7,4.5 L10.2,9.6 L5.6,13.8 Z" fill="#eac17a"/>
<path d="M7,4 L13.6,0.4 L15.8,3.6 L10,8.2 Z" fill="#6a6a6a"/>
<path d="M9.6,2.2 L12,6" stroke="#f3f3f3" stroke-width="0.9"/></svg>
<div style="position:absolute;left:64.3px;top:95.20px;height:18px;line-height:18px;font-size:12px;color:#444;white-space:pre;">格式刷</div>
<div style="position:absolute;left:15.0px;top:118.40px;height:18.2px;line-height:18.2px;font-size:12.2px;color:#444;white-space:pre;width:60px;text-align:center;">剪贴板</div>
<svg style="position:absolute;left:101.9px;top:124.89999999999999px;" width="9" height="9" viewBox="0 0 9 9"><path d="M0.5,6.9 V0.5 H7.4 M3.5,3.5 L8,7.8 M8,3.6 V7.9 H3.7" fill="none" stroke="#333" stroke-width="1"/></svg>
<div style="position:absolute;left:114.0px;top:47px;width:1.2px;height:85.5px;background:#8c8c8c"></div>
<div style="position:absolute;left:123px;top:54px;width:107px;height:23px;background:#fff;border:1px solid #ababab;box-sizing:border-box"></div>
<div style="position:absolute;left:126px;top:57.70px;height:18px;line-height:18px;font-size:12px;color:#222;white-space:pre;">宋体</div>
<svg style="position:absolute;left:219.3px;top:63.99999999999999px;" width="6" height="3.4" viewBox="0 0 6 3.4"><path d="M0,0 H6 L3,3.4 Z" fill="#666"/></svg>
<div style="position:absolute;left:232px;top:54px;width:47px;height:23px;background:#fff;border:1px solid #ababab;box-sizing:border-box"></div>
<div style="position:absolute;left:235px;top:57.70px;height:18px;line-height:18px;font-size:12px;color:#222;white-space:pre;">五号</div>
<svg style="position:absolute;left:268px;top:63.99999999999999px;" width="6" height="3.4" viewBox="0 0 6 3.4"><path d="M0,0 H6 L3,3.4 Z" fill="#666"/></svg>
<div style="position:absolute;left:284.8px;top:57.30px;height:18px;line-height:18px;font-size:14px;color:#444;white-space:pre;width:14px;text-align:center;">A</div>
<svg style="position:absolute;left:294px;top:57.5px;" width="6" height="3.4" viewBox="0 0 6 3.4"><path d="M0,3.4 L3,0 L6,3.4Z" fill="#3a74b8"/></svg>
<div style="position:absolute;left:309.6px;top:59.00px;height:16px;line-height:16px;font-size:11.5px;color:#444;white-space:pre;width:14px;text-align:center;">A</div>
<svg style="position:absolute;left:318.4px;top:57.5px;" width="6" height="3.4" viewBox="0 0 6 3.4"><path d="M0,0 H6 L3,3.4Z" fill="#3a74b8"/></svg>
<div style="position:absolute;left:331px;top:55px;width:1px;height:21px;background:#d2d2d2"></div>
<div style="position:absolute;left:335.8px;top:55.70px;height:18px;line-height:18px;font-size:12.6px;color:#444;white-space:pre;width:22px;text-align:center;">Aa</div>
<svg style="position:absolute;left:359.1px;top:63.0px;" width="7" height="4.6" viewBox="0 0 7 4.6"><path d="M1,1 L3.5,3.6 L6,1" fill="none" stroke="#444" stroke-width="1.2"/></svg>
<div style="position:absolute;left:376px;top:55px;width:1px;height:21px;background:#d2d2d2"></div>
<div style="position:absolute;left:384.0px;top:55.80px;height:14px;line-height:14px;font-size:11.5px;color:#666;white-space:pre;width:12px;text-align:center;">A</div>
<svg style="position:absolute;left:386px;top:58px;" width="15" height="15" viewBox="0 0 15 15"><path d="M9.2,3.8 L13.8,7.2 L6.8,14.2 L2.2,10.8 Z" fill="#e8879a"/><path d="M3.4,9.6 L8,13" stroke="#f3f3f3" stroke-width="1"/></svg>
<div style="position:absolute;left:404.6px;top:55.20px;height:12px;line-height:12px;font-size:8.6px;color:#444;white-space:pre;width:24px;text-align:center;">wén</div>
<div style="position:absolute;left:409.6px;top:64.20px;height:12px;line-height:12px;font-size:8.6px;color:#2e6ab5;white-space:pre;width:14px;text-align:center;font-weight:bold;">文</div>
<div style="position:absolute;left:432px;top:57px;width:16px;height:16px;border:1px solid #3a74b8;box-sizing:border-box"></div>
<div style="position:absolute;left:432.0px;top:57.30px;height:16px;line-height:16px;font-size:14px;color:#444;white-space:pre;width:16px;text-align:center;">A</div>
<div style="position:absolute;left:126.30000000000001px;top:86.60px;height:18px;line-height:18px;font-size:12px;color:#444;white-space:pre;width:14px;text-align:center;font-weight:bold;">B</div>
<div style="position:absolute;left:150.2px;top:86.60px;height:18px;line-height:18px;font-size:14px;color:#444;white-space:pre;width:14px;text-align:center;font-style:italic;font-weight:bold;font-family:'Liberation Serif',serif;font-size:13.5px;">I</div>
<div style="position:absolute;left:174.3px;top:86.40px;height:18px;line-height:18px;font-size:12px;color:#444;white-space:pre;width:14px;text-align:center;font-weight:bold;">U</div>
<div style="position:absolute;left:177px;top:101.6px;width:9px;height:1.2px;background:#444"></div>
<svg style="position:absolute;left:195.7px;top:94.2px;" width="7" height="4.6" viewBox="0 0 7 4.6"><path d="M1,1 L3.5,3.6 L6,1" fill="none" stroke="#444" stroke-width="1.2"/></svg>
<div style="position:absolute;left:209.0px;top:88.20px;height:14px;line-height:14px;font-size:10px;color:#444;white-space:pre;width:24px;text-align:center;text-decoration:line-through;">abc</div>
<div style="position:absolute;left:237.0px;top:86.60px;height:18px;line-height:18px;font-size:12.5px;color:#444;white-space:pre;width:12px;text-align:center;font-weight:bold;">x</div>
<div style="position:absolute;left:245.4px;top:96.10px;height:9px;line-height:9px;font-size:6.5px;color:#2e6ab5;white-space:pre;width:8px;text-align:center;font-weight:bold;">2</div>
<div style="position:absolute;left:260.6px;top:86.60px;height:18px;line-height:18px;font-size:12.5px;color:#444;white-space:pre;width:12px;text-align:center;font-weight:bold;">x</div>
<div style="position:absolute;left:269.6px;top:87.50px;height:9px;line-height:9px;font-size:6.5px;color:#2e6ab5;white-space:pre;width:8px;text-align:center;font-weight:bold;">2</div>
<div style="position:absolute;left:284px;top:86px;width:1px;height:21px;background:#d2d2d2"></div>
<svg style="position:absolute;left:293.2px;top:88.4px;" width="14" height="15" viewBox="0 0 14 15"><path d="M1,13.6 L5.4,1 H8.2 L12.6,13.6 H10 L9,10.4 H4.6 L3.6,13.6 Z M5.3,8.2 L6.8,3.6 L8.3,8.2 Z" fill="#fff" fill-rule="evenodd" stroke="#3a74b8" stroke-width="1" stroke-linejoin="round" style="filter:drop-shadow(0 0 0.8px #8fb4e6)"/></svg>
<svg style="position:absolute;left:312.1px;top:94.2px;" width="7" height="4.6" viewBox="0 0 7 4.6"><path d="M1,1 L3.5,3.6 L6,1" fill="none" stroke="#444" stroke-width="1.2"/></svg>
<div style="position:absolute;left:327.8px;top:85.20px;height:12px;line-height:12px;font-size:10.6px;color:#4a4a4a;white-space:pre;width:14px;text-align:center;">ab</div>
<svg style="position:absolute;left:332px;top:88px;" width="15" height="13" viewBox="0 0 15 13"><path d="M12.6,0.6 L14.4,2.2 L5.4,10.4 L1.6,11.8 L3.4,8.8 Z" fill="#6e6e6e"/></svg>
<div style="position:absolute;left:330px;top:100px;width:16px;height:3.8px;background:#ffff00"></div>
<svg style="position:absolute;left:352.2px;top:94.2px;" width="7" height="4.6" viewBox="0 0 7 4.6"><path d="M1,1 L3.5,3.6 L6,1" fill="none" stroke="#444" stroke-width="1.2"/></svg>
<div style="position:absolute;left:369.0px;top:85.60px;height:18px;line-height:18px;font-size:13.6px;color:#444;white-space:pre;width:16px;text-align:center;">A</div>
<div style="position:absolute;left:369px;top:100px;width:16px;height:3.8px;background:#e80000"></div>
<svg style="position:absolute;left:390.9px;top:94.2px;" width="7" height="4.6" viewBox="0 0 7 4.6"><path d="M1,1 L3.5,3.6 L6,1" fill="none" stroke="#444" stroke-width="1.2"/></svg>
<div style="position:absolute;left:409px;top:89px;width:14px;height:14px;background:#c6c6c6"></div>
<div style="position:absolute;left:409.0px;top:87.80px;height:16px;line-height:16px;font-size:15px;color:#444;white-space:pre;width:14px;text-align:center;">A</div>
<div style="position:absolute;left:432px;top:88px;width:16px;height:16px;border:1px solid #555;border-radius:50%;box-sizing:border-box"></div>
<div style="position:absolute;left:434.0px;top:90.00px;height:12px;line-height:12px;font-size:9.5px;color:#444;white-space:pre;width:12px;text-align:center;">字</div>
<div style="position:absolute;left:258.0px;top:118.50px;height:18.2px;line-height:18.2px;font-size:12.2px;color:#444;white-space:pre;width:40px;text-align:center;">字体</div>
<svg style="position:absolute;left:446.4px;top:124.89999999999999px;" width="9" height="9" viewBox="0 0 9 9"><path d="M0.5,6.9 V0.5 H7.4 M3.5,3.5 L8,7.8 M8,3.6 V7.9 H3.7" fill="none" stroke="#333" stroke-width="1"/></svg>
<div style="position:absolute;left:458.09999999999997px;top:47px;width:1.2px;height:85.5px;background:#8c8c8c"></div>
<svg style="position:absolute;left:470px;top:56px;" width="15" height="17" viewBox="0 0 15 17"><circle cx="2.5" cy="2.6" r="1.5" fill="#3a74b8"/><rect x="6.4" y="2.1" width="7.8" height="1" fill="#555"/><circle cx="2.5" cy="8.6" r="1.5" fill="#3a74b8"/><rect x="6.4" y="8.1" width="7.8" height="1" fill="#555"/><circle cx="2.5" cy="14.6" r="1.5" fill="#3a74b8"/><rect x="6.4" y="14.1" width="7.8" height="1" fill="#555"/></svg>
<svg style="position:absolute;left:492.0px;top:63.0px;" width="7" height="4.6" viewBox="0 0 7 4.6"><path d="M1,1 L3.5,3.6 L6,1" fill="none" stroke="#444" stroke-width="1.2"/></svg>
<svg style="position:absolute;left:508px;top:55px;" width="17" height="19" viewBox="0 0 17 19"><text x="3.3" y="6" font-size="6.2" font-weight="bold" fill="#3a74b8" text-anchor="middle" font-family="Liberation Sans,sans-serif">1</text><rect x="7.2" y="3.1" width="8.7" height="1" fill="#555"/><text x="3.3" y="12" font-size="6.2" font-weight="bold" fill="#3a74b8" text-anchor="middle" font-family="Liberation Sans,sans-serif">2</text><rect x="7.2" y="9.1" width="8.7" height="1" fill="#555"/><text x="3.3" y="18" font-size="6.2" font-weight="bold" fill="#3a74b8" text-anchor="middle" font-family="Liberation Sans,sans-serif">3</text><rect x="7.2" y="15.1" width="8.7" height="1" fill="#555"/></svg>
<svg style="position:absolute;left:531.1px;top:63.0px;" width="7" height="4.6" viewBox="0 0 7 4.6"><path d="M1,1 L3.5,3.6 L6,1" fill="none" stroke="#444" stroke-width="1.2"/></svg>
<svg style="position:absolute;left:546px;top:55px;" width="19" height="19" viewBox="0 0 19 19"><text x="3" y="6" font-size="6" font-weight="bold" fill="#3a74b8" text-anchor="middle" font-family="Liberation Sans,sans-serif">1</text><rect x="6" y="3.1" width="12" height="1" fill="#555"/>
<text x="7" y="12" font-size="6" font-weight="bold" fill="#3a74b8" text-anchor="middle" font-family="Liberation Sans,sans-serif">a</text><rect x="11" y="9.1" width="7" height="1" fill="#555"/>
<text x="11" y="18" font-size="6" font-weight="bold" fill="#3a74b8" text-anchor="middle" font-family="Liberation Sans,sans-serif">i</text><rect x="14.4" y="15.1" width="3.6" height="1" fill="#555"/></svg>
<svg style="position:absolute;left:567.9px;top:63.0px;" width="7" height="4.6" viewBox="0 0 7 4.6"><path d="M1,1 L3.5,3.6 L6,1" fill="none" stroke="#444" stroke-width="1.2"/></svg>
<div style="position:absolute;left:585px;top:55px;width:1px;height:21px;background:#d2d2d2"></div>
<svg style="position:absolute;left:593px;top:57px;" width="16" height="15" viewBox="0 0 16 15"><path d="M0.6,8 H6.6 M3.4,5 L0.6,8 L3.4,11" fill="none" stroke="#3a74b8" stroke-width="1.5"/><rect x="0" y="1.0" width="16" height="1" fill="#555"/><rect x="8" y="4.0" width="8" height="1" fill="#555"/><rect x="8" y="7.0" width="8" height="1" fill="#555"/><rect x="8" y="10.0" width="8" height="1" fill="#555"/><rect x="0" y="13.0" width="16" height="1" fill="#555"/></svg>
<svg style="position:absolute;left:617px;top:57px;" width="16" height="15" viewBox="0 0 16 15"><path d="M0.4,8 H6.4 M3.6,5 L6.4,8 L3.6,11" fill="none" stroke="#3a74b8" stroke-width="1.5"/><rect x="0" y="1.0" width="16" height="1" fill="#555"/><rect x="8" y="4.0" width="8" height="1" fill="#555"/><rect x="8" y="7.0" width="8" height="1" fill="#555"/><rect x="8" y="10.0" width="8" height="1" fill="#555"/><rect x="0" y="13.0" width="16" height="1" fill="#555"/></svg>
<div style="position:absolute;left:640px;top:55px;width:1px;height:21px;background:#d2d2d2"></div>
<svg style="position:absolute;left:647px;top:57px;" width="18" height="16" viewBox="0 0 18 16"><path d="M2.2,3 H6.6 M3.8,1 L1.6,3 L3.8,5 M11.4,3 H15.8 M14.2,1 L16.4,3 L14.2,5" fill="none" stroke="#3a74b8" stroke-width="1.2"/><text x="9" y="15" font-size="12.5" fill="#505050" stroke="#505050" stroke-width="0.3" text-anchor="middle" font-family="Liberation Sans,sans-serif" textLength="13" lengthAdjust="spacingAndGlyphs">A</text></svg>
<svg style="position:absolute;left:667.9px;top:63.0px;" width="7" height="4.6" viewBox="0 0 7 4.6"><path d="M1,1 L3.5,3.6 L6,1" fill="none" stroke="#444" stroke-width="1.2"/></svg>
<div style="position:absolute;left:685px;top:55px;width:1px;height:21px;background:#d2d2d2"></div>
<svg style="position:absolute;left:693px;top:56px;" width="16" height="17" viewBox="0 0 16 17"><text x="5" y="7.6" font-size="8.6" fill="#3a74b8" text-anchor="middle" font-family="Liberation Sans,sans-serif">A</text><text x="5" y="15.8" font-size="8.6" fill="#8a4bb5" text-anchor="middle" font-family="Liberation Sans,sans-serif">Z</text><path d="M12.6,1 V15 M10,12.2 L12.6,15.2 L15.2,12.2" fill="none" stroke="#555" stroke-width="1.2"/></svg>
<div style="position:absolute;left:716px;top:55px;width:1px;height:21px;background:#d2d2d2"></div>
<svg style="position:absolute;left:726px;top:58px;" width="12" height="14" viewBox="0 0 12 14"><path d="M10.4,0.8 V4.4 H4.6 M6.6,2.4 L4.4,4.4 L6.6,6.4" fill="none" stroke="#555" stroke-width="1.1"/><path d="M1,10 H5.6 M3.6,8 L5.8,10 L3.6,12" fill="none" stroke="#555" stroke-width="1.1"/></svg>
<div style="position:absolute;left:467px;top:85px;width:22px;height:23px;background:#c6c6c6;border:1px solid #9a9a9a;box-sizing:border-box"></div>
<svg style="position:absolute;left:471px;top:90px;" width="14" height="12" viewBox="0 0 14 12"><rect x="0" y="1.0" width="14" height="1" fill="#555"/><rect x="0" y="4.0" width="10" height="1" fill="#555"/><rect x="0" y="7.0" width="14" height="1" fill="#555"/><rect x="0" y="10.0" width="10" height="1" fill="#555"/></svg>
<svg style="position:absolute;left:495px;top:90px;" width="14" height="12" viewBox="0 0 14 12"><rect x="0" y="1.0" width="14" height="1" fill="#555"/><rect x="2" y="4.0" width="10" height="1" fill="#555"/><rect x="0" y="7.0" width="14" height="1" fill="#555"/><rect x="2" y="10.0" width="10" height="1" fill="#555"/></svg>
<svg style="position:absolute;left:519px;top:90px;" width="14" height="12" viewBox="0 0 14 12"><rect x="0" y="1.0" width="14" height="1" fill="#555"/><rect x="4" y="4.0" width="10" height="1" fill="#555"/><rect x="0" y="7.0" width="14" height="1" fill="#555"/><rect x="4" y="10.0" width="10" height="1" fill="#555"/></svg>
<svg style="position:absolute;left:543px;top:90px;" width="14" height="12" viewBox="0 0 14 12"><rect x="0" y="1.0" width="14" height="1" fill="#555"/><rect x="0" y="4.0" width="14" height="1" fill="#555"/><rect x="0" y="7.0" width="14" height="1" fill="#555"/><rect x="0" y="10.0" width="14" height="1" fill="#555"/></svg>
<svg style="position:absolute;left:566px;top:87px;" width="16" height="17" viewBox="0 0 16 17"><path d="M0.6,0 V17 M15.4,0 V17" stroke="#3a74b8" stroke-width="1.1"/><path d="M3,3 H13 M5,1 L3,3 L5,5 M11,1 L13,3 L11,5" fill="none" stroke="#3a74b8" stroke-width="1.1"/><rect x="2.5" y="8.0" width="11" height="1" fill="#555"/><rect x="2.5" y="10.0" width="11" height="1" fill="#555"/><rect x="2.5" y="12.0" width="11" height="1" fill="#555"/><rect x="2.5" y="14.0" width="11" height="1" fill="#555"/><rect x="2.5" y="16.0" width="11" height="1" fill="#555"/></svg>
<div style="position:absolute;left:589px;top:86px;width:1px;height:21px;background:#d2d2d2"></div>
<svg style="position:absolute;left:597px;top:87px;" width="16" height="17" viewBox="0 0 16 17"><path d="M3,1 V16 M0.6,3.6 L3,0.8 L5.4,3.6 M0.6,13.4 L3,16.2 L5.4,13.4" fill="none" stroke="#3a74b8" stroke-width="1.2"/><rect x="7.5" y="4.0" width="7.5" height="1" fill="#555"/><rect x="7.5" y="7.0" width="7.5" height="1" fill="#555"/><rect x="7.5" y="10.0" width="7.5" height="1" fill="#555"/><rect x="7.5" y="13.0" width="7.5" height="1" fill="#555"/></svg>
<svg style="position:absolute;left:616.9px;top:94.2px;" width="7" height="4.6" viewBox="0 0 7 4.6"><path d="M1,1 L3.5,3.6 L6,1" fill="none" stroke="#444" stroke-width="1.2"/></svg>
<div style="position:absolute;left:634px;top:86px;width:1px;height:21px;background:#d2d2d2"></div>
<svg style="position:absolute;left:641px;top:87px;" width="18" height="17" viewBox="0 0 18 17"><path d="M3.2,8 L8.4,2.4 L13.4,7.2 L8,12.6 Z" fill="#fff" stroke="#555" stroke-width="1.1"/><path d="M7.6,5.6 V1.6 a1.4,1.4 0 0 1 2.8,0 V3.6" fill="none" stroke="#555" stroke-width="1"/><path d="M13.6,5.4 c2,1.4 2.4,3.4 1.2,5.2 c-0.2,-2 -1,-3 -2.4,-3.6 Z" fill="#3a74b8"/><rect x="1" y="13.6" width="15.4" height="2.8" fill="#fff" stroke="#8a8a8a" stroke-width="0.9"/></svg>
<svg style="position:absolute;left:663.9px;top:94.2px;" width="7" height="4.6" viewBox="0 0 7 4.6"><path d="M1,1 L3.5,3.6 L6,1" fill="none" stroke="#444" stroke-width="1.2"/></svg>
<svg style="position:absolute;left:681px;top:88px;" width="15" height="15" viewBox="0 0 15 15"><path d="M1,1.5 H14 M1,7.5 H14 M1.5,1 V13 M7.5,1 V13 M13.5,1 V13" stroke="#777" stroke-width="1" stroke-dasharray="1,1" fill="none"/><path d="M1,13.5 H14" stroke="#444" stroke-width="1.2"/></svg>
<svg style="position:absolute;left:703.1px;top:94.2px;" width="7" height="4.6" viewBox="0 0 7 4.6"><path d="M1,1 L3.5,3.6 L6,1" fill="none" stroke="#444" stroke-width="1.2"/></svg>
<div style="position:absolute;left:576.0px;top:118.50px;height:18.2px;line-height:18.2px;font-size:12.2px;color:#444;white-space:pre;width:40px;text-align:center;">段落</div>
<svg style="position:absolute;left:738.4px;top:124.89999999999999px;" width="9" height="9" viewBox="0 0 9 9"><path d="M0.5,6.9 V0.5 H7.4 M3.5,3.5 L8,7.8 M8,3.6 V7.9 H3.7" fill="none" stroke="#333" stroke-width="1"/></svg>
<div style="position:absolute;left:750.1px;top:47px;width:1.2px;height:85.5px;background:#8c8c8c"></div>
<div style="position:absolute;left:760.4px;top:49.4px;width:867px;height:59.4px;background:#fff;border:1px solid #d0d0d0;box-sizing:border-box"></div>
<div style="position:absolute;left:906.3px;top:50.3px;width:71.6px;height:56.6px;border:1px solid #9a9a9a;box-sizing:border-box;background:#d6d6d6"></div>
<div style="position:absolute;left:910.3px;top:54.3px;width:63.6px;height:48.6px;background:#fff"></div>
<div style="position:absolute;left:768.8px;top:57.6px;width:58.2px;height:26px;line-height:26px;overflow:hidden;white-space:pre;color:#000;font-family:'Noto Serif CJK SC','Liberation Serif',serif;font-feature-settings:'hwid';font-size:12.2px;letter-spacing:0.7px;font-weight:400;">AaBbCcDdEe</div>
<div style="position:absolute;left:758.3px;top:85.40px;height:18px;line-height:18px;font-size:12px;color:#5e5e5e;white-space:pre;width:80px;text-align:center;"><svg width="6" height="7" viewBox="0 0 6 7" style="vertical-align:-0.5px;margin-right:4px"><path d="M4.6,0.4 V4 H1 M2.6,2.2 L0.8,4 L2.6,5.8" fill="none" stroke="#666" stroke-width="0.9"/></svg>表内正文</div>
<div style="position:absolute;left:840.8px;top:57.6px;width:69.0px;height:26px;line-height:26px;overflow:hidden;white-space:pre;color:#000;font-family:'Noto Serif CJK SC','Liberation Serif',serif;font-feature-settings:'hwid';font-size:12.2px;letter-spacing:0.7px;font-weight:400;color:#3c3c78;transform:scaleX(0.86);transform-origin:left;font-weight:300;">AaBbCcDdEe</div>
<div style="position:absolute;left:830.3px;top:85.40px;height:18px;line-height:18px;font-size:12px;color:#5e5e5e;white-space:pre;width:80px;text-align:center;"><svg width="6" height="7" viewBox="0 0 6 7" style="vertical-align:-0.5px;margin-right:4px"><path d="M4.6,0.4 V4 H1 M2.6,2.2 L0.8,4 L2.6,5.8" fill="none" stroke="#666" stroke-width="0.9"/></svg>表内左...</div>
<div style="position:absolute;left:912.8px;top:57.6px;width:58.2px;height:26px;line-height:26px;overflow:hidden;white-space:pre;color:#000;font-family:'Noto Serif CJK SC','Liberation Serif',serif;font-feature-settings:'hwid';font-size:12.2px;letter-spacing:0.7px;font-weight:400;">AaBbCcDdEe</div>
<div style="position:absolute;left:902.3px;top:85.40px;height:18px;line-height:18px;font-size:12px;color:#5e5e5e;white-space:pre;width:80px;text-align:center;"><svg width="6" height="7" viewBox="0 0 6 7" style="vertical-align:-0.5px;margin-right:4px"><path d="M4.6,0.4 V4 H1 M2.6,2.2 L0.8,4 L2.6,5.8" fill="none" stroke="#666" stroke-width="0.9"/></svg>正文</div>
<div style="position:absolute;left:984.8px;top:57.6px;width:58.2px;height:26px;line-height:26px;overflow:hidden;white-space:pre;color:#000;font-family:'Noto Serif CJK SC','Liberation Serif',serif;font-feature-settings:'hwid';font-size:12.2px;letter-spacing:0.7px;font-weight:400;">AaBbCcDdEe</div>
<div style="position:absolute;left:974.3px;top:85.40px;height:18px;line-height:18px;font-size:12px;color:#5e5e5e;white-space:pre;width:80px;text-align:center;"><svg width="6" height="7" viewBox="0 0 6 7" style="vertical-align:-0.5px;margin-right:4px"><path d="M4.6,0.4 V4 H1 M2.6,2.2 L0.8,4 L2.6,5.8" fill="none" stroke="#666" stroke-width="0.9"/></svg>正文缩进</div>
<div style="position:absolute;left:1056.8px;top:57.6px;width:58.2px;height:26px;line-height:26px;overflow:hidden;white-space:pre;color:#000;font-family:'Noto Serif CJK SC','Liberation Serif',serif;font-feature-settings:'hwid';font-size:12.2px;letter-spacing:0.7px;font-weight:400;">AaBbCcDdEe</div>
<div style="position:absolute;left:1046.3px;top:85.40px;height:18px;line-height:18px;font-size:12px;color:#5e5e5e;white-space:pre;width:80px;text-align:center;"><svg width="6" height="7" viewBox="0 0 6 7" style="vertical-align:-0.5px;margin-right:4px"><path d="M4.6,0.4 V4 H1 M2.6,2.2 L0.8,4 L2.6,5.8" fill="none" stroke="#666" stroke-width="0.9"/></svg>无间隔</div>
<div style="position:absolute;left:1128.6px;top:57.3px;width:58.8px;height:26px;line-height:26px;overflow:hidden;white-space:pre;color:#000;font-family:'Noto Serif CJK SC','Liberation Serif',serif;font-feature-settings:'hwid';font-size:17px;letter-spacing:1.0px;font-weight:400;">1<span style="margin-left:22.5px;letter-spacing:2.9px">AaBb</span></div>
<div style="position:absolute;left:1116.7px;top:85.40px;height:18px;line-height:18px;font-size:12px;color:#5e5e5e;white-space:pre;width:80px;text-align:center;">标题 1</div>
<div style="position:absolute;left:1200.0px;top:57.3px;width:60.0px;height:26px;line-height:26px;overflow:hidden;white-space:pre;color:#000;font-family:'Noto Serif CJK SC','Liberation Serif',serif;font-feature-settings:'hwid';font-size:17px;letter-spacing:1.0px;font-weight:400;">1.1<span style="margin-left:19.5px;letter-spacing:2.4px">AaBb</span></div>
<div style="position:absolute;left:1188.7px;top:85.40px;height:18px;line-height:18px;font-size:12px;color:#5e5e5e;white-space:pre;width:80px;text-align:center;">标题 2</div>
<div style="position:absolute;left:1273.0px;top:57.3px;width:58.0px;height:26px;line-height:26px;overflow:hidden;white-space:pre;color:#000;font-family:'Noto Serif CJK SC','Liberation Serif',serif;font-feature-settings:'hwid';font-size:17px;letter-spacing:1.0px;font-weight:400;">1.1.1</div>
<div style="position:absolute;left:1260.7px;top:85.40px;height:18px;line-height:18px;font-size:12px;color:#5e5e5e;white-space:pre;width:80px;text-align:center;">标题 3</div>
<div style="position:absolute;left:1345.0px;top:58.0px;width:58.0px;height:26px;line-height:26px;overflow:hidden;white-space:pre;color:#000;font-family:'Noto Serif CJK SC','Liberation Serif',serif;font-feature-settings:'hwid';font-size:13.8px;letter-spacing:0.85px;font-weight:300;">1.1.1.1</div>
<div style="position:absolute;left:1332.7px;top:85.40px;height:18px;line-height:18px;font-size:12px;color:#5e5e5e;white-space:pre;width:80px;text-align:center;">标题 4</div>
<div style="position:absolute;left:1416.5px;top:57.8px;width:58.5px;height:26px;line-height:26px;overflow:hidden;white-space:pre;color:#000;font-family:'Liberation Sans',sans-serif;font-size:13.8px;letter-spacing:1.4px;">1.1.1.1.1</div>
<div style="position:absolute;left:1404.7px;top:85.40px;height:18px;line-height:18px;font-size:12px;color:#5e5e5e;white-space:pre;width:80px;text-align:center;">标题 5</div>
<div style="position:absolute;left:1488.5px;top:57.8px;width:58.5px;height:26px;line-height:26px;overflow:hidden;white-space:pre;color:#000;font-family:'Liberation Sans',sans-serif;font-size:13.8px;letter-spacing:1.3px;font-weight:bold;">1.1.1.1.1</div>
<div style="position:absolute;left:1476.7px;top:85.40px;height:18px;line-height:18px;font-size:12px;color:#5e5e5e;white-space:pre;width:80px;text-align:center;">标题 6</div>
<div style="position:absolute;left:1560.5px;top:57.8px;width:58.5px;height:26px;line-height:26px;overflow:hidden;white-space:pre;color:#000;font-family:'Liberation Sans',sans-serif;font-size:13.8px;letter-spacing:1.4px;color:#555;">1.1.1.1.1</div>
<div style="position:absolute;left:1548.7px;top:85.40px;height:18px;line-height:18px;font-size:12px;color:#5e5e5e;white-space:pre;width:80px;text-align:center;">标题 7</div>
<div style="position:absolute;left:1627px;top:49.4px;width:23.6px;height:59.4px;background:#f3f3f3;border:1px solid #ababab;box-sizing:border-box"></div>
<svg style="position:absolute;left:1634.5px;top:74px;" width="8" height="7" viewBox="0 0 8 7"><path d="M0.5,0.8 H7.5" stroke="#444" stroke-width="1.1"/><path d="M1,3.2 L4,6.2 L7,3.2" fill="none" stroke="#444" stroke-width="1.2"/></svg>
<div style="position:absolute;left:1178.0px;top:118.50px;height:18.2px;line-height:18.2px;font-size:12.2px;color:#444;white-space:pre;width:40px;text-align:center;">样式</div>
<svg style="position:absolute;left:1649.9px;top:124.89999999999999px;" width="9" height="9" viewBox="0 0 9 9"><path d="M0.5,6.9 V0.5 H7.4 M3.5,3.5 L8,7.8 M8,3.6 V7.9 H3.7" fill="none" stroke="#333" stroke-width="1"/></svg>
<div style="position:absolute;left:1661.1000000000001px;top:47px;width:1.2px;height:85.5px;background:#8c8c8c"></div>
<svg style="position:absolute;left:1673.5px;top:51px;" width="14" height="13" viewBox="0 0 14 13"><circle cx="8.6" cy="4.8" r="3.6" fill="none" stroke="#3a74b8" stroke-width="1.5"/><path d="M6,7.6 L1.2,12" stroke="#3a74b8" stroke-width="2"/></svg>
<div style="position:absolute;left:1691.8px;top:49.10px;height:18px;line-height:18px;font-size:12px;color:#444;white-space:pre;">查找</div>
<svg style="position:absolute;left:1730.9px;top:55.300000000000004px;" width="7" height="4.6" viewBox="0 0 7 4.6"><path d="M1,1 L3.5,3.6 L6,1" fill="none" stroke="#444" stroke-width="1.2"/></svg>
<div style="position:absolute;left:1672.6px;top:71.40px;height:10px;line-height:10px;font-size:10.5px;color:#555;white-space:pre;">a</div>
<div style="position:absolute;left:1678.3px;top:71.20px;height:10px;line-height:10px;font-size:10.5px;color:#8a4bb5;white-space:pre;">b</div>
<div style="position:absolute;left:1678.2px;top:79.60px;height:10px;line-height:10px;font-size:10.5px;color:#555;white-space:pre;">a</div>
<div style="position:absolute;left:1683.8px;top:79.60px;height:10px;line-height:10px;font-size:10.5px;color:#3a74b8;white-space:pre;">c</div>
<svg style="position:absolute;left:1672.6px;top:82px;" width="5" height="5" viewBox="0 0 5 5"><path d="M0.6,0.4 V3 H4 M2.6,1.4 L4.2,3 L2.6,4.6" fill="none" stroke="#3a74b8" stroke-width="1"/></svg>
<div style="position:absolute;left:1691.8px;top:72.30px;height:18px;line-height:18px;font-size:12px;color:#444;white-space:pre;">替换</div>
<svg style="position:absolute;left:1676px;top:95px;" width="10" height="15" viewBox="0 0 10 15"><path d="M1,1 V11.6 L3.6,9 L5.6,13.6 L7.2,12.8 L5.2,8.4 H8.8 Z" fill="#fff" stroke="#555" stroke-width="1"/></svg>
<div style="position:absolute;left:1691.8px;top:95.20px;height:18px;line-height:18px;font-size:12px;color:#444;white-space:pre;">选择</div>
<svg style="position:absolute;left:1720.0px;top:101.7px;" width="7" height="4.6" viewBox="0 0 7 4.6"><path d="M1,1 L3.5,3.6 L6,1" fill="none" stroke="#444" stroke-width="1.2"/></svg>
<div style="position:absolute;left:1688.0px;top:118.30px;height:18.2px;line-height:18.2px;font-size:12.2px;color:#444;white-space:pre;width:40px;text-align:center;">编辑</div>
<div style="position:absolute;left:1753.8000000000002px;top:47px;width:1.2px;height:85.5px;background:#8c8c8c"></div>
<div style="position:absolute;left:1777.9px;top:58.9px;width:10.2px;height:10.2px;background:#ff9300;border-radius:50%;box-shadow:0 0 1px #ffa020;filter:blur(0.4px)"></div>
<div style="position:absolute;left:1763.5px;top:82.60px;height:18px;line-height:18px;font-size:12px;color:#444;white-space:pre;width:40px;text-align:center;">加</div>
<div style="position:absolute;left:1763.5px;top:96.90px;height:18px;line-height:18px;font-size:12px;color:#444;white-space:pre;width:40px;text-align:center;">载项</div>
<div style="position:absolute;left:1758.0px;top:118.30px;height:18.2px;line-height:18.2px;font-size:12.2px;color:#444;white-space:pre;width:50px;text-align:center;">加载项</div>
<div style="position:absolute;left:1811.8000000000002px;top:47px;width:1.2px;height:85.5px;background:#8c8c8c"></div>
</body></html>
